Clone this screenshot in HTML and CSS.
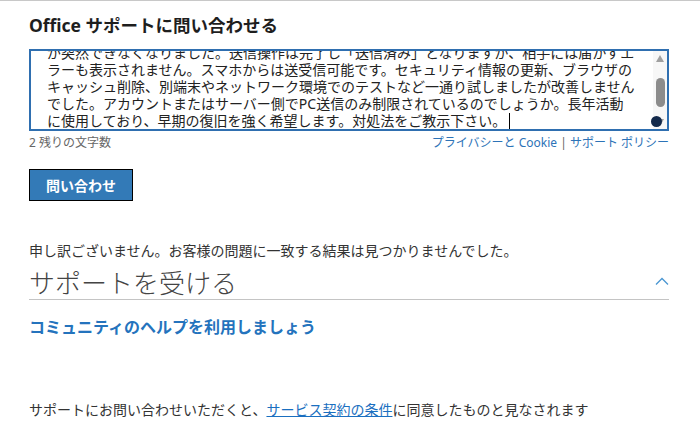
FILE: index.html
```html
<!DOCTYPE html>
<html lang="ja">
<head>
    <meta charset="UTF-8">
    <meta name="viewport" content="width=device-width, initial-scale=1.0">
    <title>Office サポートに問い合わせる</title>
    <link rel="stylesheet" href="styles.css">
</head>
<body>
    <div class="page">
        <h1 class="title">Office サポートに問い合わせる</h1>

        <div class="msg-box">
            <div class="msg-view">
                <p class="msg-text">が突然できなくなりました。送信操作は完了し「送信済み」となりますが、相手には届かずエ<br>ラーも表示されません。スマホからは送受信可能です。セキュリティ情報の更新、ブラウザの<br>キャッシュ削除、別端末やネットワーク環境でのテストなど一通り試しましたが改善しません<br>でした。アカウントまたはサーバー側でPC送信のみ制限されているのでしょうか。長年活動<br>に使用しており、早期の復旧を強く希望します。対処法をご教示下さい。<span class="caret"></span></p>
            </div>
            <div class="scrollbar">
                <span class="arrow up"></span>
                <span class="thumb"></span>
                <span class="arrow down"></span>
            </div>
            <span class="dot"></span>
        </div>

        <div class="meta">
            <span class="count">2 残りの文字数</span>
            <span class="policy"><a href="#">プライバシーと Cookie</a> | <a href="#">サポート ポリシー</a></span>
        </div>

        <button class="submit">問い合わせ</button>

        <p class="sorry">申し訳ございません。お客様の問題に一致する結果は見つかりませんでした。</p>

        <div class="section-head">
            <h2>サポートを受ける</h2>
            <svg class="chevron" width="14" height="8" viewBox="0 0 14 8">
                <polyline points="1,7.5 7,1.5 13,7.5" fill="none" stroke="#4a96d2" stroke-width="1.3"/>
            </svg>
        </div>

        <a class="community" href="#">コミュニティのヘルプを利用しましょう</a>

        <p class="terms">サポートにお問い合わせいただくと、<a href="#">サービス契約の条件</a>に同意したものと見なされます</p>
    </div>
</body>
</html>
```

FILE: styles.css
```css
body {
    margin: 0;
    font-family: "Noto Sans", "Noto Sans CJK JP", sans-serif;
    color: #333;
    background-color: #fff;
    border-top: 1px solid #c8c8c8;
}
.page {
    width: 640px;
    margin-left: 29px;
    padding-top: 13px;
}
.title {
    margin: 0;
    font-size: 17.5px;
    line-height: 22px;
    font-weight: bold;
    color: #1e1e1e;
}
.msg-box {
    position: relative;
    display: flex;
    height: 82px;
    box-sizing: border-box;
    margin-top: 13px;
    border: 2px solid #2f6fb0;
}
.msg-view {
    flex: 1;
    overflow: hidden;
    padding-left: 16px;
}
.msg-text {
    margin: -5.6px 0 0 0;
    font-size: 14px;
    line-height: 16.8px;
    white-space: nowrap;
    color: #222;
}
.caret {
    display: inline-block;
    width: 1px;
    height: 16px;
    margin-left: 3px;
    vertical-align: -3px;
    background-color: #000;
}
.scrollbar {
    width: 14px;
    background-color: #f7f7f7;
    display: flex;
    flex-direction: column;
    align-items: center;
}
.arrow {
    width: 0;
    height: 0;
    border-left: 4.5px solid transparent;
    border-right: 4.5px solid transparent;
}
.arrow.up {
    margin-top: 4px;
    border-bottom: 7px solid #a0a0a0;
}
.arrow.down {
    margin-top: auto;
    margin-bottom: 3px;
    border-top: 7px solid #a0a0a0;
}
.thumb {
    width: 9px;
    height: 29px;
    margin-top: 16px;
    border-radius: 5px;
    background-color: #8c8c8c;
}
.dot {
    position: absolute;
    left: 620px;
    top: 65px;
    width: 11px;
    height: 11px;
    border-radius: 50%;
    background-color: #13294b;
}
.meta {
    display: flex;
    justify-content: space-between;
    margin-top: 4px;
    font-size: 12px;
    line-height: 16px;
}
.count {
    color: #666;
}
.policy {
    color: #666;
}
.policy a {
    color: #2d73b7;
    text-decoration: none;
}
.submit {
    display: block;
    width: 104px;
    height: 32px;
    margin-top: 18px;
    padding: 0;
    border: 1px solid #000;
    background-color: #337ab7;
    color: #fff;
    font-family: inherit;
    font-size: 14px;
    font-weight: bold;
}
.sorry {
    margin: 40px 0 0 0;
    font-size: 14px;
    line-height: 20px;
}
.section-head {
    display: flex;
    justify-content: space-between;
    align-items: center;
    margin-top: 6px;
    border-bottom: 1px solid #c4c4c4;
}
.section-head h2 {
    margin: 0;
    font-size: 26px;
    line-height: 32px;
    font-weight: 300;
    color: #444;
}
.chevron {
    margin-top: -4px;
}
.community {
    display: block;
    margin-top: 16px;
    font-size: 16px;
    line-height: 22px;
    font-weight: 600;
    color: #2473bd;
    text-decoration: none;
}
.terms {
    margin: 62px 0 0 0;
    font-size: 14px;
    line-height: 20px;
}
.terms a {
    color: #1a6fc0;
    text-decoration: underline;
}
```
